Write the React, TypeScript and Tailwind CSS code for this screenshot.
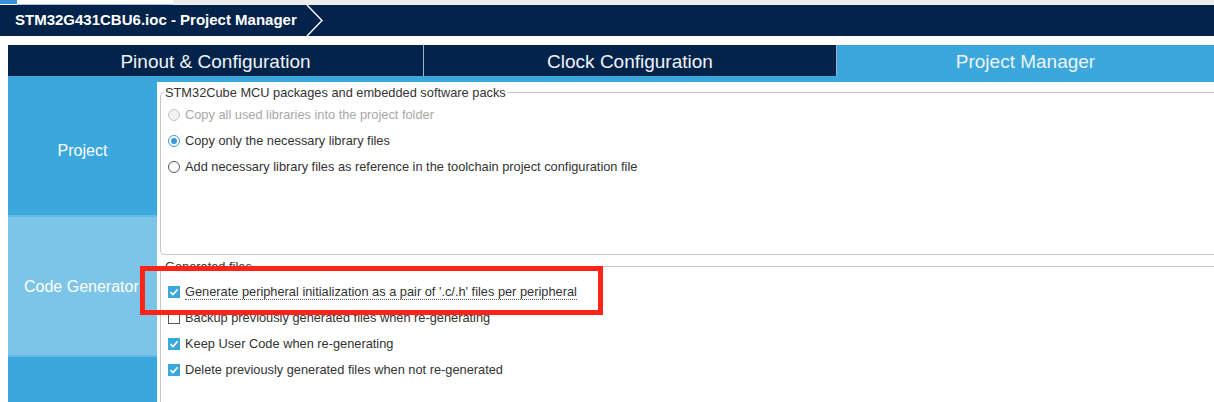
import React from "react";

const navy = "bg-[#03234b]";

function Radio({ state }: { state: "disabled" | "on" | "off" }) {
  if (state === "on") {
    return (
      <span className="flex h-[12px] w-[12px] items-center justify-center rounded-full border border-[#3a9ad9] bg-white">
        <span className="h-[6px] w-[6px] rounded-full bg-[#3a9ad9]" />
      </span>
    );
  }
  return (
    <span
      className={
        state === "disabled"
          ? "h-[12px] w-[12px] rounded-full border border-[#c4c4c4] bg-[#f2f2f2]"
          : "h-[12px] w-[12px] rounded-full border border-[#555555] bg-white"
      }
    />
  );
}

function Check({ checked }: { checked: boolean }) {
  if (!checked) {
    return <span className="h-[12px] w-[12px] border border-[#555555] bg-white" />;
  }
  return (
    <span className="flex h-[12px] w-[12px] items-center justify-center bg-[#3aa8dc]">
      <svg width="10" height="10" viewBox="0 0 10 10" fill="none">
        <path d="M1.5 5.2 4 7.6 8.6 2.4" stroke="white" strokeWidth="1.6" />
      </svg>
    </span>
  );
}

export default function App() {
  const radios: { label: string; state: "disabled" | "on" | "off" }[] = [
    { label: "Copy all used libraries into the project folder", state: "disabled" },
    { label: "Copy only the necessary library files", state: "on" },
    {
      label: "Add necessary library files as reference in the toolchain project configuration file",
      state: "off",
    },
  ];

  const checks = [
    { label: "Generate peripheral initialization as a pair of '.c/.h' files per peripheral", checked: true, dotted: true },
    { label: "Backup previously generated files when re-generating", checked: false },
    { label: "Keep User Code when re-generating", checked: true },
    { label: "Delete previously generated files when not re-generated", checked: true },
  ];

  return (
    <div className="relative h-[402px] w-[1214px] overflow-hidden bg-white font-['Liberation_Sans',Arial,sans-serif]">
      {/* window strip */}
      <div className="flex h-[5px]">
        <div className="h-[4px] w-[17px] bg-[#3b8fd6]" />
        <div className="w-[156px] border-b border-[#a9c8e8] bg-white" />
        <div className="flex-1 bg-[#ececec]" />
      </div>

      {/* header */}
      <div className={`relative flex h-[31px] items-center ${navy}`}>
        <span className="pl-[15px] text-[15px] font-bold text-white">
          STM32G431CBU6.ioc - Project Manager
        </span>
        <svg className="absolute left-[305px] top-0" width="20" height="31" viewBox="0 0 20 31" fill="none">
          <path d="M2 0 17 15.5 2 31" stroke="white" strokeWidth="1.4" />
        </svg>
      </div>

      {/* tabs */}
      <div className="ml-[8px] mt-[9px] flex h-[31px] text-[19px] text-[#eef3f8]">
        <div className={`flex w-[416px] items-center justify-center border-r border-[#9fb3c8] pt-[3px] ${navy}`}>
          Pinout &amp; Configuration
        </div>
        <div className={`flex w-[413px] items-center justify-center border-r border-[#9fb3c8] pt-[3px] ${navy}`}>
          Clock Configuration
        </div>
        <div className="flex flex-1 items-center justify-center bg-[#3aa8dc] pt-[3px]">Project Manager</div>
      </div>
      <div className="ml-[8px] h-[6px] bg-[#3aa8dc]" />

      {/* body */}
      <div className="ml-[8px] flex">
        <div className="flex w-[149px] shrink-0 flex-col text-[16px] text-white">
          <div className="flex h-[133px] items-center justify-center bg-[#3aa8dc] pt-[4px]">Project</div>
          <div className="h-[2px] bg-[#62bbe5]" />
          <div className="flex h-[138px] items-center overflow-hidden whitespace-nowrap bg-[#7cc5e8] pl-[16px] pt-[2px]">
            Code Generator
          </div>
          <div className="h-[2px] bg-[#62bbe5]" />
          <div className="h-[60px] bg-[#3aa8dc]" />
        </div>

        <div className="min-w-0 flex-1 pl-[3px] text-[12.8px] text-[#333333]">
          <fieldset className="mt-[3px] h-[170px] w-[1070px] rounded-[4px] border border-[#c6c9cc] pl-[7px] pt-[2px]">
            <legend className="-ml-[4px] px-[1px] leading-[15px]">
              STM32Cube MCU packages and embedded software packs
            </legend>
            {radios.map((r) => (
              <div key={r.label} className="flex h-[26px] items-center gap-[5px]">
                <Radio state={r.state} />
                <span className={r.state === "disabled" ? "text-[#a8a8a8]" : ""}>{r.label}</span>
              </div>
            ))}
          </fieldset>

          <fieldset className="mt-[4px] h-[200px] w-[1070px] rounded-[4px] border border-[#c6c9cc] pl-[7px] pt-[5px]">
            <legend className="-ml-[4px] px-[1px] leading-[15px]">Generated files</legend>
            {checks.map((c) => (
              <div key={c.label} className="flex h-[26px] items-center gap-[5px]">
                <Check checked={c.checked} />
                <span className={c.dotted ? "border-b border-dotted border-[#555555] leading-[14px]" : ""}>
                  {c.label}
                </span>
              </div>
            ))}
          </fieldset>
        </div>
      </div>

      {/* highlight box */}
      <div className="absolute left-[140px] top-[266px] h-[49px] w-[463px] border-[5px] border-[#fe2418]" />
    </div>
  );
}
